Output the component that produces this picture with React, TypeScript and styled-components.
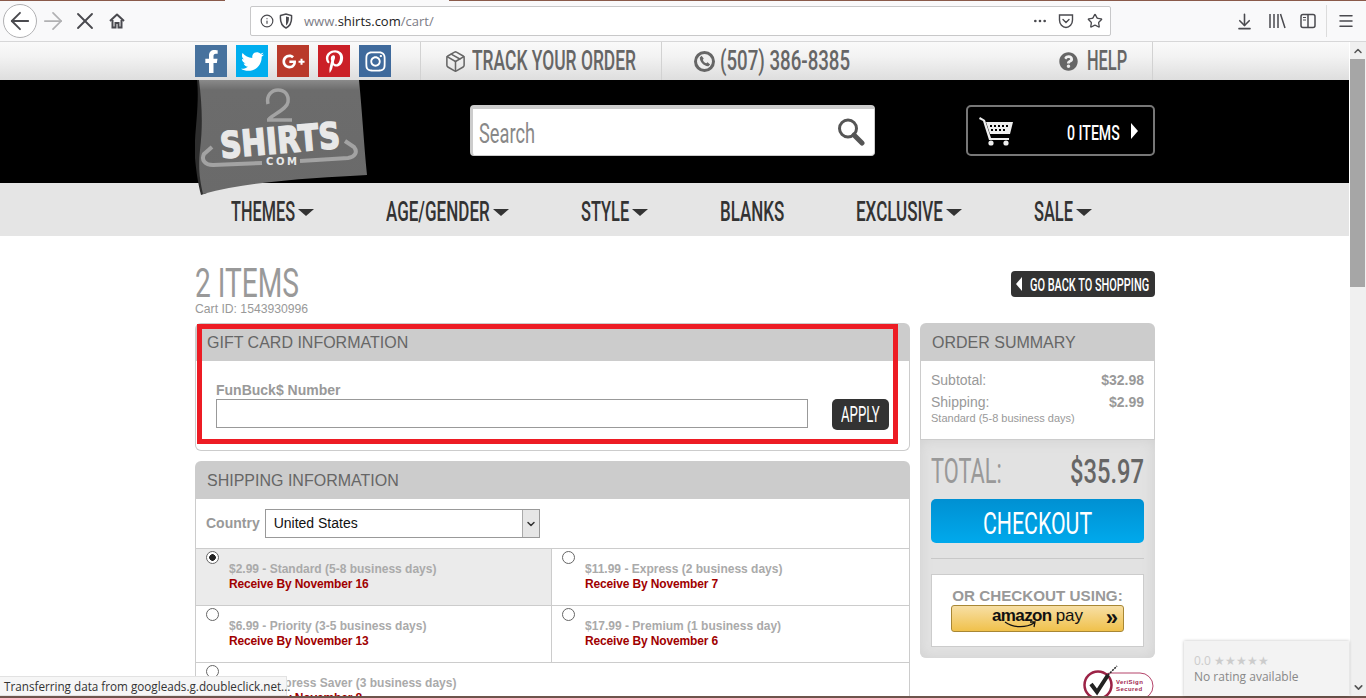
import React, { useLayoutEffect, useRef, useState } from "react";
import styled, { createGlobalStyle } from "styled-components";
import {
  ArrowLeft,
  ArrowRight,
  X,
  Info,
  Ellipsis,
  Star,
  ArrowDownToLine,
  Menu,
  ChevronUp,
  ChevronDown,
  Package,
} from "lucide-react";
import {
  FaFacebookF,
  FaTwitter,
  FaGooglePlusG,
  FaPinterestP,
  FaInstagram,
  FaQuestionCircle,
} from "react-icons/fa";

const display = `Roboto, "Liberation Sans", Arial, sans-serif`;
const arial = `"Liberation Sans", Arial, sans-serif`;

const GlobalStyle = createGlobalStyle`
  html, body {
    margin: 0;
    padding: 0;
    height: 100%;
    overflow: hidden;
    background: #fff;
  }
  * { box-sizing: border-box; }
`;

const Root = styled.div`
  position: relative;
  width: 1366px;
  height: 698px;
  display: flex;
  flex-direction: column;
  overflow: hidden;
  font-family: ${arial};
`;

const TabSliver = styled.div`
  height: 1px;
  background: linear-gradient(to right, #8a5a4a 225px, #f9f9fa 225px, #f9f9fa 449px, #8a5a4a 449px);
`;

const Toolbar = styled.div`
  height: 41px;
  display: flex;
  align-items: center;
  background: #f9f9fa;
  border-bottom: 1px solid #d7d7d8;
  color: #4a4a4f;
`;

const BackCircle = styled.div`
  width: 34px;
  height: 34px;
  margin-left: 3px;
  border: 1px solid #b1b1b3;
  border-radius: 50%;
  background: #fff;
  display: flex;
  align-items: center;
  justify-content: center;
`;

const ToolSlot = styled.div<{ $w: number; $muted?: boolean }>`
  width: ${(p) => p.$w}px;
  flex: none;
  display: flex;
  justify-content: center;
  align-items: center;
  color: ${(p) => (p.$muted ? "#b1b1b3" : "#4a4a4f")};
`;

const UrlBar = styled.div`
  width: 861px;
  height: 30px;
  margin: 0 117px;
  flex: none;
  background: #fff;
  border: 1px solid #c8c8c9;
  border-radius: 2px;
  display: flex;
  align-items: center;
  padding-left: 9px;
`;

const UrlText = styled.div`
  margin-left: 6px;
  font: 13px "Open Sans", sans-serif;
  color: #7c7c86;
  flex: 1;
  b {
    font-weight: 400;
    color: #222;
  }
`;

const ToolSep = styled.div`
  width: 1px;
  height: 32px;
  background: #dcdcdc;
`;

const Viewport = styled.div`
  flex: 1;
  min-height: 0;
  display: flex;
`;

const Page = styled.div`
  flex: 1;
  min-width: 0;
  overflow: hidden;
`;

const Scrollbar = styled.div`
  width: 17px;
  background: #f0f0f0;
  border-left: 1px solid #fff;
  display: flex;
  flex-direction: column;
  color: #555;
`;

const ScrollCap = styled.div`
  height: 17px;
  display: flex;
  align-items: center;
  justify-content: center;
`;

const ScrollThumb = styled.div`
  width: 15px;
  height: 228px;
  background: #a6a6a6;
`;

const ScrollSpace = styled.div`
  flex: 1;
`;

const TaskSliver = styled.div`
  height: 2px;
  background: #6e544c;
`;

const Wrap = styled.div`
  width: 960px;
  margin: 0 auto 0 195px;
`;

const FitBox = styled.span<{ $w: number }>`
  display: inline-block;
  flex: none;
  width: ${(p) => p.$w}px;
  white-space: nowrap;
`;

const FitInner = styled.span`
  display: inline-block;
  transform-origin: left center;
`;

// stretches a run of text to the width it has in the shot; there is no condensed font installed
function Fit({ w, children }: { w: number; children: React.ReactNode }) {
  const ref = useRef<HTMLSpanElement>(null);
  const [scale, setScale] = useState(0.6);
  useLayoutEffect(() => {
    if (ref.current) setScale(w / ref.current.offsetWidth);
  }, [w]);
  return (
    <FitBox $w={w}>
      <FitInner ref={ref} style={{ transform: `scaleX(${scale})` }}>
        {children}
      </FitInner>
    </FitBox>
  );
}

const TopBar = styled.div`
  height: 38px;
  background: linear-gradient(to bottom, #fafafa 0%, #f2f2f2 40%, #dedede 100%);
`;

const TopRow = styled(Wrap)`
  height: 38px;
  display: flex;
  align-items: stretch;
  width: 958px;
`;

const Socials = styled.div`
  width: 225px;
  display: flex;
  gap: 9px;
  padding-top: 3px;
`;

const SocialTile = styled.div<{ $bg: string }>`
  width: 32px;
  height: 32px;
  background: ${(p) => p.$bg};
  color: #fff;
  display: flex;
  align-items: center;
  justify-content: center;
  font-size: 23px;
`;

const TopLink = styled.div<{ $w?: number; $pad: number }>`
  ${(p) => (p.$w ? `width: ${p.$w}px;` : "flex: 1;")}
  display: flex;
  align-items: center;
  gap: 5px;
  padding-left: ${(p) => p.$pad}px;
  border-left: 1px solid #d2d2d2;
  color: #666;
  font: 500 27px ${display};
`;

const HelpLink = styled.div`
  width: 94px;
  display: flex;
  align-items: center;
  gap: 9px;
  border-right: 1px solid #d2d2d2;
  color: #666;
  font: 500 27px ${display};
`;

const PhoneDisc = styled.span`
  width: 21px;
  height: 21px;
  flex: none;
  border: 3px solid #666;
  border-radius: 50%;
  background: #eee;
  color: #666;
  display: flex;
  align-items: center;
  justify-content: center;
`;

const HeaderBand = styled.div`
  height: 103px;
  background: #000;
`;

const HeaderRow = styled(Wrap)`
  position: relative;
  height: 103px;
  display: flex;
  align-items: center;
  padding: 0 0 2px 275px;
`;

const LogoMark = styled.svg`
  position: absolute;
  left: 0;
  top: 0;
  z-index: 2;
`;

const SearchBox = styled.div`
  width: 405px;
  height: 51px;
  background: #fff;
  border: 1px solid #ccc;
  border-top: 4px solid #ccc;
  border-left-width: 3px;
  border-radius: 4px;
  display: flex;
  align-items: center;
  justify-content: space-between;
  padding: 0 9px 0 6px;
  color: #888;
  font: 400 27px ${display};
`;

const SearchLabel = styled.span`
  margin-top: 4px;
`;

const CartButton = styled.div`
  width: 189px;
  height: 51px;
  margin-left: 91px;
  border: 2px solid #777;
  border-radius: 5px;
  display: flex;
  align-items: center;
  padding: 0 15px 0 11px;
  color: #fff;
  font: 500 21px ${display};
`;

const CartLabel = styled.span`
  margin: 4px 11px 0 auto;
`;

const Caret = styled.span<{ $dir: "down" | "right" | "left"; $color: string; $size: number }>`
  display: inline-block;
  width: 0;
  height: 0;
  flex: none;
  ${(p) =>
    p.$dir === "down"
      ? `border-left: ${p.$size}px solid transparent;
         border-right: ${p.$size}px solid transparent;
         border-top: ${p.$size - 1}px solid ${p.$color};`
      : `border-top: ${p.$size}px solid transparent;
         border-bottom: ${p.$size}px solid transparent;
         border-${p.$dir === "right" ? "left" : "right"}: ${p.$size - 1}px solid ${p.$color};`}
`;

const NavBand = styled.div`
  height: 53px;
  background: #e5e5e5;
`;

const NavRow = styled(Wrap)`
  height: 53px;
  display: flex;
  align-items: center;
  gap: 72px;
  padding: 5px 0 0 36px;
`;

const NavItem = styled.div`
  display: flex;
  align-items: center;
  gap: 3px;
  color: #333;
  font: 500 27px ${display};
`;

const Main = styled(Wrap)`
  padding-top: 27px;
`;

const TitleRow = styled.div`
  height: 60px;
  display: flex;
  justify-content: space-between;
  align-items: flex-start;
`;

const PageTitle = styled.h1`
  margin: 0;
  height: 39px;
  padding-top: 3px;
  color: #999;
  font: 400 40px/36px ${display};
`;

const CartId = styled.div`
  color: #999;
  font-size: 12.2px;
  line-height: 14px;
`;

const BackButton = styled.div`
  margin-top: 8px;
  width: 144px;
  height: 26px;
  background: #333;
  border-radius: 4px;
  color: #fff;
  display: flex;
  align-items: center;
  gap: 8px;
  padding-left: 5px;
  font: 500 19px ${display};
`;

const Columns = styled.div`
  display: grid;
  grid-template-columns: 715px 235px;
  column-gap: 10px;
  align-items: start;
`;

const Stack = styled.div`
  display: flex;
  flex-direction: column;
  gap: 10px;
`;

const Panel = styled.section`
  position: relative;
  border-radius: 6px;
`;

const PanelHead = styled.div`
  height: 38px;
  padding: 2px 0 0 12px;
  display: flex;
  align-items: center;
  background: #ccc;
  border-radius: 6px 6px 0 0;
  color: #666;
  font-size: 16px;
`;

const GiftBody = styled.div`
  height: 90px;
  padding: 21px 20px 0;
  border: 1px solid #ccc;
  border-top: 0;
  border-radius: 0 0 6px 6px;
  display: flex;
  align-items: flex-start;
  gap: 24px;
`;

const FieldColumn = styled.div`
  width: 592px;
`;

const FieldLabel = styled.div`
  color: #999;
  font-size: 14px;
  font-weight: 700;
  line-height: 17px;
`;

const TextField = styled.div`
  height: 29px;
  border: 1px solid #999;
`;

const ApplyButton = styled.div`
  margin-top: 17px;
  width: 57px;
  height: 31px;
  border-radius: 5px;
  background: #333;
  color: #fff;
  display: flex;
  align-items: center;
  justify-content: center;
  font: 400 22px ${display};
`;

const Highlight = styled.div`
  position: absolute;
  left: 2px;
  top: 1px;
  width: 701px;
  height: 120px;
  border: 5px solid #ed1c24;
  pointer-events: none;
`;

const ShipBody = styled.div`
  border-left: 1px solid #ccc;
  border-right: 1px solid #ccc;
`;

const CountryRow = styled.div`
  height: 49px;
  padding: 10px 0 0 10px;
  display: flex;
  gap: 5px;
`;

const CountryLabel = styled.div`
  color: #999;
  font-size: 14px;
  font-weight: 700;
  line-height: 29px;
`;

const CountrySelect = styled.div`
  width: 275px;
  height: 29px;
  border: 1px solid #999;
  display: flex;
  align-items: center;
  justify-content: space-between;
  padding-left: 8px;
  color: #111;
  font-size: 14px;
  line-height: 25px;
`;

const SelectArrow = styled.div`
  width: 17px;
  height: 27px;
  background: #e6e6e6;
  border-left: 1px solid #aaa;
  display: flex;
  align-items: center;
  justify-content: center;
  color: #333;
`;

const ShipGrid = styled.div`
  display: grid;
  grid-template-columns: 355px 1fr;
  border-top: 1px solid #ccc;
`;

const ShipCell = styled.div<{ $active?: boolean; $right?: boolean }>`
  height: 57px;
  padding: 2px 0 0 10px;
  display: flex;
  gap: 10px;
  background: ${(p) => (p.$active ? "#ebebeb" : "#fff")};
  border-bottom: 1px solid #ccc;
  ${(p) => p.$right && "border-left: 1px solid #ccc;"}
`;

const Radio = styled.span<{ $on?: boolean }>`
  flex: none;
  width: 13px;
  height: 13px;
  border: 1px solid #666;
  border-radius: 50%;
  background: ${(p) => (p.$on ? "radial-gradient(circle, #222 0 3px, #fff 3.6px)" : "#fff")};
`;

const ShipText = styled.div`
  padding-top: 11px;
  font-size: 12px;
  font-weight: 700;
  line-height: 15px;
  color: #aaa;
`;

const ShipDate = styled.div`
  color: #a00000;
  letter-spacing: -0.15px;
`;

const SummaryRows = styled.div`
  height: 78px;
  padding: 8px 10px 0;
  border-left: 1px solid #ccc;
  border-right: 1px solid #ccc;
  color: #999;
`;

const SummaryLine = styled.div`
  display: flex;
  justify-content: space-between;
  font-size: 14px;
  line-height: 22px;
`;

const SmallNote = styled.div`
  font-size: 11px;
  line-height: 11px;
`;

const TotalBox = styled.div`
  height: 219px;
  padding: 10px 11px 0;
  background: #e2e2e2;
  border-top: 1px solid #ccc;
  border-radius: 0 0 6px 6px;
  box-shadow: inset 0 0 14px #d0d0d0;
`;

const TotalRow = styled.div`
  height: 49px;
  padding-bottom: 7px;
  display: flex;
  justify-content: space-between;
  align-items: center;
`;

const TotalLabel = styled.div`
  color: #999;
  font: 400 35px ${display};
`;

const TotalValue = styled.div`
  color: #666;
  font: 500 34px ${display};
`;

const CheckoutButton = styled.div`
  height: 44px;
  padding-top: 4px;
  border-radius: 5px;
  background: linear-gradient(to bottom, #0090d2, #00a9ec);
  color: #fff;
  display: flex;
  align-items: center;
  justify-content: center;
  font: 400 32px ${display};
`;

const Rule = styled.div`
  height: 1px;
  margin: 15px 0;
  background: #c8c8c8;
`;

const AltCheckout = styled.div`
  height: 73px;
  border: 1px solid #ccc;
  background: #fff;
  padding-top: 12px;
  display: flex;
  flex-direction: column;
  align-items: center;
`;

const AltLabel = styled.div`
  color: #999;
  font-size: 15.2px;
  font-weight: 700;
  line-height: 17px;
  margin-bottom: 1px;
`;

const AmazonButton = styled.div`
  position: relative;
  width: 173px;
  height: 27px;
  border: 1px solid #a88734;
  border-radius: 3px;
  background: linear-gradient(to bottom, #f7dfa5, #f0c14b);
  display: flex;
  justify-content: center;
  color: #111;
  font-size: 17px;
  line-height: 20px;
  b {
    font-size: 17px;
    letter-spacing: -0.6px;
    margin-right: 4px;
  }
`;

const AmazonSmile = styled.svg`
  position: absolute;
  left: 52px;
  top: 15px;
`;

const AmazonChevrons = styled.span`
  position: absolute;
  right: 5px;
  top: 2px;
  font-size: 22px;
  font-weight: 700;
  line-height: 20px;
`;

const SealRow = styled.div`
  display: flex;
  justify-content: flex-end;
  padding: 7px 1px 0 0;
`;

const StatusTip = styled.div`
  position: absolute;
  left: 0;
  bottom: 2px;
  width: 287px;
  height: 20px;
  padding-left: 4px;
  background: #f6f6f6;
  border: 1px solid #e2e2e2;
  border-left: 0;
  color: #333;
  font: 11.7px/19px "Open Sans", sans-serif;
  white-space: nowrap;
`;

const RatingBadge = styled.div`
  position: absolute;
  right: 17px;
  bottom: 2px;
  width: 165px;
  height: 55px;
  padding: 12px 0 0 10px;
  background: #f3f3f3;
  box-shadow: 0 0 3px rgba(0, 0, 0, 0.25);
  color: #888;
  font: 12px/16px "Open Sans", sans-serif;
`;

const RatingStars = styled.div`
  color: #ccc;
`;

function Logo() {
  return (
    <LogoMark width="174" height="116" viewBox="0 0 174 116">
      <defs>
        <linearGradient id="flag" x1="0" y1="0" x2="0" y2="1">
          <stop offset="0" stopColor="#8a8a8a" />
          <stop offset="0.09" stopColor="#6c6c6c" />
          <stop offset="1" stopColor="#6a6a6a" />
        </linearGradient>
      </defs>
      <path d="M2 0 C5 25 -2 62 0 78 C1 90 3 104 6 115 L12 113 L9 60 L8 0Z" fill="#2e2e2e" />
      <path
        d="M4 0 H164 C167 30 169 65 172 95 C125 98 60 100 8 114 C5 100 3 90 5 70 C8 45 7 25 4 0Z"
        fill="url(#flag)"
      />
      <path
        d="M73 24 C71 15 77 10 83 10 C90 10 94 15 93 22 C92 29 80 33 74 39 M72 40 H97"
        fill="none"
        stroke="#a3a3a3"
        strokeWidth="3.5"
      />
      <path
        d="M17 67 L9 74 C6 80 10 85 18 85 L67 83 M105 81 L153 78 C160 77 163 72 159 67 L150 61"
        fill="none"
        stroke="#a3a3a3"
        strokeWidth="4"
      />
      <text
        x="25"
        y="73"
        transform="rotate(-5 85 60)"
        textLength="120"
        lengthAdjust="spacingAndGlyphs"
        fill="#e8e8e8"
        stroke="#e8e8e8"
        strokeWidth="1.6"
        fontFamily="DejaVu Sans"
        fontWeight="700"
        fontSize="36"
      >
        SHIRTS
      </text>
      <text
        x="71"
        y="85"
        textLength="31"
        fill="#e8e8e8"
        fontFamily="DejaVu Sans"
        fontWeight="700"
        fontSize="10"
      >
        COM
      </text>
    </LogoMark>
  );
}

function CartIcon() {
  return (
    <svg width="35" height="30" viewBox="0 0 35 30" fill="#eee">
      <path d="M1 1 L6 4 L12 22 H30 V24 H10 L4 5 L0 3Z" />
      <path d="M7 6 H34 L31 18 H11Z" />
      <g fill="#000">
        <rect x="11" y="9" width="2" height="2" />
        <rect x="15" y="9" width="2" height="2" />
        <rect x="19" y="9" width="2" height="2" />
        <rect x="23" y="9" width="2" height="2" />
        <rect x="27" y="9" width="2" height="2" />
        <rect x="12" y="13" width="2" height="2" />
        <rect x="16" y="13" width="2" height="2" />
        <rect x="20" y="13" width="2" height="2" />
        <rect x="24" y="13" width="2" height="2" />
      </g>
      <circle cx="12" cy="27" r="2.6" />
      <circle cx="27" cy="27" r="2.6" />
    </svg>
  );
}

function SearchGlass() {
  return (
    <svg width="28" height="30" viewBox="0 0 28 30" fill="none">
      <circle cx="11" cy="11.5" r="8.5" stroke="#555" strokeWidth="3" />
      <path d="M17 18 L25 26" stroke="#555" strokeWidth="5" strokeLinecap="round" />
    </svg>
  );
}

function HomeIcon() {
  return (
    <svg width="16" height="16" viewBox="0 0 16 16" fill="none" stroke="#4a4a4f" strokeWidth="2">
      <path d="M1 8 L8 1.5 L15 8" strokeLinejoin="round" />
      <path d="M3.5 7 V14.5 H6.5 V10 H9.5 V14.5 H12.5 V7" />
    </svg>
  );
}

function Shield() {
  return (
    <svg width="14" height="16" viewBox="0 0 14 16" fill="none">
      <path d="M1.5 2.5 L7 1 L12.5 2.5 C13 8 11 13 7 15 C3 13 1 8 1.5 2.5Z" stroke="#4a4a4f" strokeWidth="1.5" />
      <path d="M7 3.5 L10 4.2 C10 8 9 11 7 12.5Z" fill="#4a4a4f" />
    </svg>
  );
}

function Pocket() {
  return (
    <svg width="16" height="16" viewBox="0 0 16 16" fill="none" stroke="#4a4a4f" strokeWidth="1.4">
      <path d="M1.5 2 H14.5 V7 C14.5 11 11.5 14.5 8 14.5 C4.5 14.5 1.5 11 1.5 7Z" />
      <path d="M5 6.5 L8 9.5 L11 6.5" strokeLinecap="round" />
    </svg>
  );
}

function LibraryIcon() {
  return (
    <svg width="18" height="16" viewBox="0 0 18 16" stroke="#4a4a4f" strokeWidth="1.5" fill="none">
      <path d="M2 1 V15 M6 1 V15 M10 1 V15 M12.5 1 L17 15" />
    </svg>
  );
}

function SidebarIcon() {
  return (
    <svg width="16" height="16" viewBox="0 0 16 16" fill="none" stroke="#4a4a4f" strokeWidth="1.5">
      <rect x="1" y="1.5" width="14" height="13" rx="2" />
      <path d="M8 2 V14" />
      <path d="M3 4.5 H6 M3 7 H6" strokeWidth="1" />
    </svg>
  );
}

function PhoneGlyph() {
  return (
    <svg width="12" height="12" viewBox="0 0 14 14" fill="currentColor">
      <path d="M3 1 L5.5 4 L4.5 5.5 C5 7.5 6.5 9 8.5 9.5 L10 8.5 L13 11 L11 13 C6 13.5 0.5 8 1 3Z" />
    </svg>
  );
}

function VeriSignSeal() {
  return (
    <svg width="71" height="31" viewBox="0 0 71 31">
      <rect x="14" y="8" width="56" height="26" rx="13" fill="#fff" stroke="#b5456b" strokeWidth="1" />
      <circle cx="15" cy="20" r="13.5" fill="#fff" stroke="#9c2346" strokeWidth="2.5" />
      <path d="M8 19 L14 27 L25 10" fill="none" stroke="#222" strokeWidth="4" />
      <path d="M25 10 L34 1" stroke="#222" strokeWidth="1.5" strokeDasharray="2 1" />
      <text x="33" y="19" fontFamily="Liberation Sans" fontWeight="700" fontSize="6" letterSpacing="0.4" fill="#a2264e">
        VeriSign
      </text>
      <text x="33" y="26" fontFamily="Liberation Sans" fontWeight="700" fontSize="6" letterSpacing="0.4" fill="#a2264e">
        Secured
      </text>
    </svg>
  );
}

const socials = [
  { bg: "#47729e", icon: <FaFacebookF /> },
  { bg: "#00aeef", icon: <FaTwitter /> },
  { bg: "#b9392a", icon: <FaGooglePlusG /> },
  { bg: "#cb2027", icon: <FaPinterestP /> },
  { bg: "#3f6a9c", icon: <FaInstagram /> },
];

const navItems = [
  { label: "THEMES", w: 64, caret: true },
  { label: "AGE/GENDER", w: 104, caret: true },
  { label: "STYLE", w: 48, caret: true },
  { label: "BLANKS", w: 64, caret: false },
  { label: "EXCLUSIVE", w: 87, caret: true },
  { label: "SALE", w: 39, caret: true },
];

const shipping = [
  { price: "$2.99 - Standard (5-8 business days)", date: "Receive By November 16", active: true },
  { price: "$11.99 - Express (2 business days)", date: "Receive By November 7", right: true },
  { price: "$6.99 - Priority (3-5 business days)", date: "Receive By November 13" },
  { price: "$17.99 - Premium (1 business day)", date: "Receive By November 6", right: true },
  { price: "$9.99 - Express Saver (3 business days)", date: "Receive By November 8" },
];

export default function App() {
  return (
    <Root>
      <GlobalStyle />
      <TabSliver />
      <Toolbar>
        <BackCircle>
          <ArrowLeft size={28} strokeWidth={1.6} />
        </BackCircle>
        <ToolSlot $w={32} $muted>
          <ArrowRight size={28} strokeWidth={1.5} />
        </ToolSlot>
        <ToolSlot $w={32}>
          <X size={28} strokeWidth={1.6} />
        </ToolSlot>
        <ToolSlot $w={32}>
          <HomeIcon />
        </ToolSlot>
        <UrlBar>
          <Info size={14} />
          <ToolSlot $w={24}>
            <Shield />
          </ToolSlot>
          <UrlText>
            www.<b>shirts.com</b>/cart/
          </UrlText>
          <Ellipsis size={16} />
          <ToolSlot $w={36}>
            <Pocket />
          </ToolSlot>
          <ToolSlot $w={22}>
            <Star size={16} />
          </ToolSlot>
          <ToolSlot $w={4} />
        </UrlBar>
        <ToolSlot $w={32}>
          <ArrowDownToLine size={19} />
        </ToolSlot>
        <ToolSlot $w={34}>
          <LibraryIcon />
        </ToolSlot>
        <ToolSlot $w={28}>
          <SidebarIcon />
        </ToolSlot>
        <ToolSlot $w={4} />
        <ToolSep />
        <ToolSlot $w={38}>
          <Menu size={18} />
        </ToolSlot>
      </Toolbar>
      <Viewport>
        <Page>
          <TopBar>
            <TopRow>
              <Socials>
                {socials.map((s) => (
                  <SocialTile key={s.bg} $bg={s.bg}>
                    {s.icon}
                  </SocialTile>
                ))}
              </Socials>
              <TopLink $w={241} $pad={23}>
                <Package size={23} strokeWidth={1.6} />
                <Fit w={164}>TRACK YOUR ORDER</Fit>
              </TopLink>
              <TopLink $pad={32}>
                <PhoneDisc>
                  <PhoneGlyph />
                </PhoneDisc>
                <Fit w={130}>(507) 386-8385</Fit>
              </TopLink>
              <HelpLink>
                <FaQuestionCircle size={19} />
                <Fit w={40}>HELP</Fit>
              </HelpLink>
            </TopRow>
          </TopBar>
          <HeaderBand>
            <HeaderRow>
              <Logo />
              <SearchBox>
                <SearchLabel>
                  <Fit w={56}>Search</Fit>
                </SearchLabel>
                <SearchGlass />
              </SearchBox>
              <CartButton>
                <CartIcon />
                <CartLabel>
                  <Fit w={53}>0 ITEMS</Fit>
                </CartLabel>
                <Caret $dir="right" $color="#fff" $size={8} />
              </CartButton>
            </HeaderRow>
          </HeaderBand>
          <NavBand>
            <NavRow>
              {navItems.map((n) => (
                <NavItem key={n.label}>
                  <Fit w={n.w}>{n.label}</Fit>
                  {n.caret && <Caret $dir="down" $color="#333" $size={8} />}
                </NavItem>
              ))}
            </NavRow>
          </NavBand>
          <Main>
            <TitleRow>
              <div>
                <PageTitle>
                  <Fit w={104}>2 ITEMS</Fit>
                </PageTitle>
                <CartId>Cart ID: 1543930996</CartId>
              </div>
              <BackButton>
                <Caret $dir="left" $color="#fff" $size={7} />
                <Fit w={119}>GO BACK TO SHOPPING</Fit>
              </BackButton>
            </TitleRow>
            <Columns>
              <Stack>
                <Panel>
                  <PanelHead>GIFT CARD INFORMATION</PanelHead>
                  <GiftBody>
                    <FieldColumn>
                      <FieldLabel>FunBuck$ Number</FieldLabel>
                      <TextField />
                    </FieldColumn>
                    <ApplyButton>
                      <Fit w={39}>APPLY</Fit>
                    </ApplyButton>
                  </GiftBody>
                  <Highlight />
                </Panel>
                <Panel>
                  <PanelHead>SHIPPING INFORMATION</PanelHead>
                  <ShipBody>
                    <CountryRow>
                      <CountryLabel>Country</CountryLabel>
                      <CountrySelect>
                        United States
                        <SelectArrow>
                          <ChevronDown size={12} strokeWidth={3} />
                        </SelectArrow>
                      </CountrySelect>
                    </CountryRow>
                    <ShipGrid>
                      {shipping.map((s) => (
                        <ShipCell key={s.price} $active={s.active} $right={s.right}>
                          <Radio $on={s.active} />
                          <ShipText>
                            {s.price}
                            <ShipDate>{s.date}</ShipDate>
                          </ShipText>
                        </ShipCell>
                      ))}
                    </ShipGrid>
                  </ShipBody>
                </Panel>
              </Stack>
              <div>
                <Panel>
                  <PanelHead>ORDER SUMMARY</PanelHead>
                  <SummaryRows>
                    <SummaryLine>
                      Subtotal:
                      <b>$32.98</b>
                    </SummaryLine>
                    <SummaryLine>
                      Shipping:
                      <b>$2.99</b>
                    </SummaryLine>
                    <SmallNote>Standard (5-8 business days)</SmallNote>
                  </SummaryRows>
                  <TotalBox>
                    <TotalRow>
                      <TotalLabel>
                        <Fit w={71}>TOTAL:</Fit>
                      </TotalLabel>
                      <TotalValue>
                        <Fit w={74}>$35.97</Fit>
                      </TotalValue>
                    </TotalRow>
                    <CheckoutButton>
                      <Fit w={109}>CHECKOUT</Fit>
                    </CheckoutButton>
                    <Rule />
                    <AltCheckout>
                      <AltLabel>OR CHECKOUT USING:</AltLabel>
                      <AmazonButton>
                        <b>amazon</b>pay
                        <AmazonSmile width="32" height="8" viewBox="0 0 32 8" fill="none">
                          <path d="M1 1 C9 7 22 7 30 2 M26 1 L31 1 L30 6" stroke="#111" strokeWidth="1.3" />
                        </AmazonSmile>
                        <AmazonChevrons>»</AmazonChevrons>
                      </AmazonButton>
                    </AltCheckout>
                  </TotalBox>
                </Panel>
                <SealRow>
                  <VeriSignSeal />
                </SealRow>
              </div>
            </Columns>
          </Main>
        </Page>
        <Scrollbar>
          <ScrollCap>
            <ChevronUp size={12} strokeWidth={3} />
          </ScrollCap>
          <ScrollThumb />
          <ScrollSpace />
          <ScrollCap>
            <ChevronDown size={13} strokeWidth={3} />
          </ScrollCap>
        </Scrollbar>
      </Viewport>
      <TaskSliver />
      <StatusTip>Transferring data from googleads.g.doubleclick.net...</StatusTip>
      <RatingBadge>
        <RatingStars>0.0 ★★★★★</RatingStars>
        No rating available
      </RatingBadge>
    </Root>
  );
}
